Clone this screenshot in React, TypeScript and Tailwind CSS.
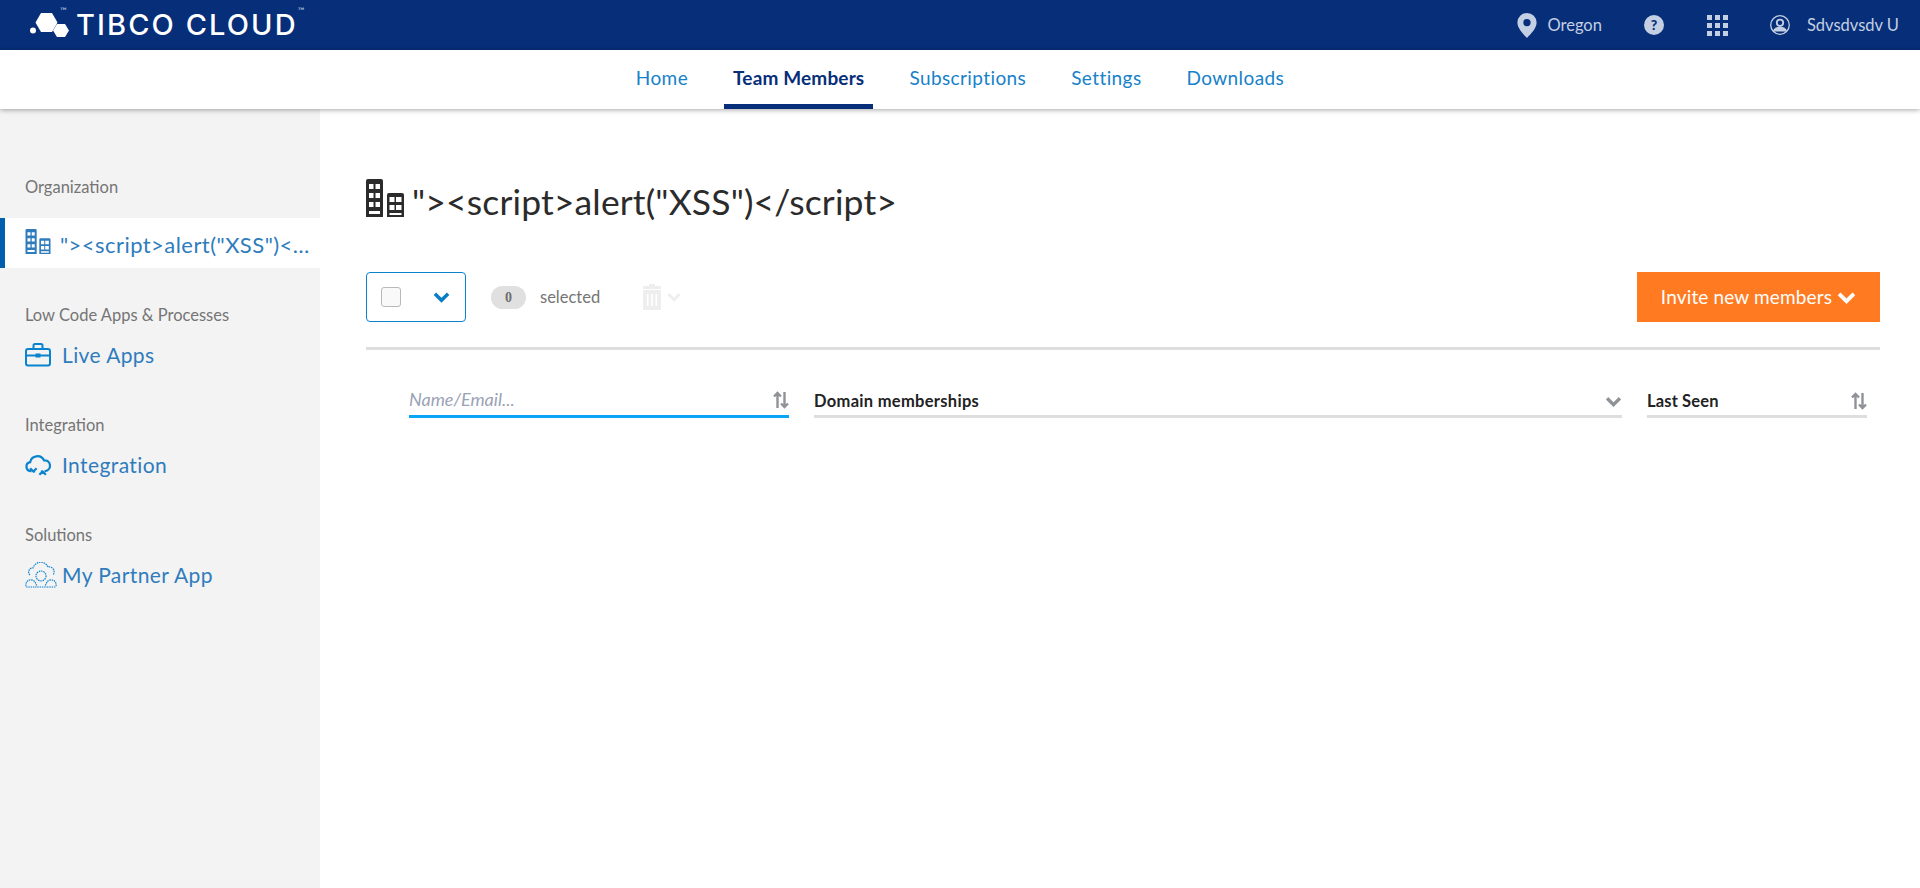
import { useState } from "react";

const FONT = "font-['Lato','Liberation_Sans',sans-serif]";

const Chevron = ({ className = "" }: { className?: string }) => (
  <svg viewBox="0 0 18 12" className={className} fill="none" stroke="currentColor" strokeWidth="3.6">
    <path d="M2 2.5 9 9.5l7-7" />
  </svg>
);

const SortIcon = () => (
  <svg viewBox="0 0 16 18" className="h-[18px] w-4 text-[#8f9297]" fill="none" stroke="currentColor" strokeWidth="2.4">
    <path d="M4.5 17V2M1 5.5l3.500-3.500L8 5.500" />
    <path d="M11.500 1v15M8 12.500l3.500 3.500 3.500-3.500" />
  </svg>
);

const Building = ({ className = "" }: { className?: string }) => (
  <svg viewBox="0 0 38 38" className={className} fill="currentColor">
    <path
      fillRule="evenodd"
      d="M2 0h13a2 2 0 0 1 2 2v36H0V2a2 2 0 0 1 2-2ZM3 5v5h4.500V5H3Zm6.500 0v5H14V5H9.500ZM3 14v5h4.500v-5H3Zm6.500 0v5H14v-5H9.500ZM3 23v5h4.500v-5H3Zm6.500 0v5H14v-5H9.500ZM3 32v3h11v-3H3Z"
    />
    <path
      fillRule="evenodd"
      d="M23 14h13a2 2 0 0 1 2 2v22H21V16a2 2 0 0 1 2-2Zm.500 4v5h5v-5h-5Zm6.500 0v5h5.500v-5H30Zm-6.500 8v5h5v-5h-5Zm6.500 0v5h5.500v-5H30Zm-6.500 8v2h12v-2h-12Z"
    />
  </svg>
);

const Briefcase = () => (
  <svg viewBox="0 0 26 24" className="h-[24px] w-[26px] text-[#0a83cf]" fill="none" stroke="currentColor" strokeWidth="2">
    <rect x="1" y="6" width="24" height="16.500" rx="2" />
    <path d="M8.500 6V2.500a1.500 1.500 0 0 1 1.500-1.500h6a1.500 1.500 0 0 1 1.500 1.500V6" />
    <path d="M1 12.500h24" />
    <rect x="10.500" y="10.500" width="5" height="4" fill="currentColor" stroke="none" />
  </svg>
);

const CloudSync = () => (
  <svg viewBox="0 0 28 24" className="h-[24px] w-[26px] text-[#0a83cf]" fill="none" stroke="currentColor" strokeWidth="2.400">
    <path d="M7 18.500H6a4.800 4.800 0 0 1-.5-9.500A8 8 0 0 1 20.500 7a5.800 5.800 0 0 1 1.500 11.500h-1" />
    <path d="M5.500 15.500 9 19l3.500-3.500M9 19h2M22.500 22.500 19 19l-3.500 3.500M19 19h-2" />
  </svg>
);

const PartnerCloud = () => (
  <svg viewBox="0 0 32 26" className="h-[26px] w-[32px] text-[#0a83cf]" fill="none" stroke="currentColor" strokeWidth="1.200" strokeDasharray="1.500 0.800">
    <path d="M5 13a4 4 0 0 1 3-7 8 8 0 0 1 15-1 5 5 0 0 1 5 8" />
    <circle cx="16" cy="14" r="5" />
    <path d="M1 24a5 5 0 0 1 9-4l2 4M31 24a5 5 0 0 0-9-4l-2 4M10 25h12M1 25h9M22 25h9" />
  </svg>
);

const Pin = () => (
  <svg viewBox="0 0 20 26" className="h-[25px] w-5 text-[#c3cfe2]" fill="currentColor">
    <path
      fillRule="evenodd"
      d="M10 0a10 10 0 0 1 10 10c0 6-6 12-10 16C6 22 0 16 0 10A10 10 0 0 1 10 0Zm0 6.200a3.800 3.800 0 1 0 0 7.600 3.800 3.800 0 0 0 0-7.600Z"
    />
  </svg>
);

const UserCircle = () => (
  <svg viewBox="0 0 20 20" className="h-5 w-5 text-[#c3cfe2]" fill="none" stroke="currentColor" strokeWidth="1.300">
    <circle cx="10" cy="10" r="9.300" />
    <circle cx="10" cy="7.800" r="3.200" strokeWidth="1.800" />
    <path d="M3.500 16.500c1-3 3.500-4 6.500-4s5.500 1 6.500 4" fill="currentColor" />
  </svg>
);

const Logo = () => (
  <div className="flex items-start">
    <svg viewBox="0 0 40 26" className="mt-[12px] h-[26px] w-[40px] text-white" fill="currentColor">
      <path d="M11 1h11l5.500 9.500L22 20H11L5.500 10.500Z" />
      <path d="M27 12h8l4 6.500-4 6.500h-8l-4-6.500Z" />
      <circle cx="3" cy="18.500" r="3" />
    </svg>
    <span className="mt-[3px] ml-[-10px] w-[10px] text-[9px] leading-[16px] text-[#c3cfe2]">™</span>
    <span className="ml-[6px] mt-[6px] font-['Inter',sans-serif] text-[29px] leading-[38px] font-medium tracking-[2.1px] text-white">
      TIBCO CLOUD
    </span>
    <span className="mt-[3px] text-[9px] leading-[16px] text-[#c3cfe2]">™</span>
  </div>
);

const TopBar = () => (
  <header className="flex h-[50px] items-start bg-[#062e79] pl-[30px] pr-[21px]">
    <Logo />
    <div className="ml-auto flex h-full items-center text-[16.5px] text-[#c3cfe2]">
      <Pin />
      <span className="ml-[10px]">Oregon</span>
      <span className="ml-[42px] flex h-5 w-5 items-center justify-center rounded-full bg-[#c3cfe2] text-[14px] leading-none font-black text-[#062e79]">
        ?
      </span>
      <span className="ml-[43px] grid grid-cols-3 gap-[3px]">
        {Array.from({ length: 9 }).map((_, i) => (
          <i key={i} className="block h-[5px] w-[5px] bg-[#c3cfe2]" />
        ))}
      </span>
      <span className="ml-[42px]">
        <UserCircle />
      </span>
      <span className="ml-[17px]">Sdvsdvsdv U</span>
    </div>
  </header>
);

const tabs = ["Home", "Team Members", "Subscriptions", "Settings", "Downloads"];

const TabBar = () => (
  <nav className="relative z-10 flex h-[59px] justify-center gap-[27px] bg-white shadow-[0_1px_5px_rgba(0,0,0,0.35)]">
    {tabs.map((t) =>
      t === "Team Members" ? (
        <a
          key={t}
          className="flex items-center border-b-[5px] border-[#062e79] px-[9px] pt-[2px] text-[19px] font-bold tracking-[0.15px] text-[#062e79]"
        >
          {t}
        </a>
      ) : (
        <a key={t} className="flex items-center px-[9px] pb-[2px] text-[19px] tracking-[0.4px] text-[#1781c9]">
          {t}
        </a>
      )
    )}
  </nav>
);

const SideGroup = ({ title, icon, label }: { title: string; icon: React.ReactNode; label: string }) => (
  <div className="mb-[35px]">
    <div className="pl-[25px] text-[16.5px] leading-[20px] text-[#757575]">{title}</div>
    <a className="mt-[5px] flex h-[50px] items-center pl-[25px] text-[21px] tracking-[0.4px] text-[#2f7cbd]">
      <span className="flex w-[37px] shrink-0">{icon}</span>
      <span>{label}</span>
    </a>
  </div>
);

const Sidebar = () => (
  <aside className="flex w-[320px] shrink-0 flex-col bg-[#f3f3f3] pt-[68px]">
    <div className="pl-[25px] text-[16.5px] leading-[20px] text-[#757575]">Organization</div>
    <a className="mt-[21px] mb-[37px] flex h-[50px] items-center border-l-[5px] border-[#015fad] bg-white pl-[20px] text-[#2f7cbd]">
      <Building className="mb-[3px] h-[25px] w-[26px] shrink-0" />
      <span className="ml-[9px] truncate pr-[6px] pt-[2px] text-[22px] tracking-[0.45px]">{'"><script>alert("XSS")</script>'}</span>
    </a>
    <SideGroup title="Low Code Apps & Processes" icon={<Briefcase />} label="Live Apps" />
    <SideGroup title="Integration" icon={<CloudSync />} label="Integration" />
    <SideGroup title="Solutions" icon={<PartnerCloud />} label="My Partner App" />
  </aside>
);

const Toolbar = () => (
  <div className="mt-[50px] flex h-[50px] items-center">
    <div className="flex h-[50px] w-[100px] items-center rounded-[4px] border border-[#0a83cf] pl-[14px]">
      <span className="h-5 w-5 rounded-[3px] border border-[#b9b9b9] bg-[#f9f9f9]" />
      <Chevron className="ml-[32px] h-[12px] w-[17px] text-[#0a7cc6]" />
    </div>
    <span className="ml-[25px] flex h-[23px] w-[35px] items-center justify-center rounded-full bg-[#e0e0e0] font-['Liberation_Serif',serif] text-[14px] font-bold text-[#6f6f6f]">
      0
    </span>
    <span className="ml-[14px] text-[16.5px] text-[#757575]">selected</span>
    <svg viewBox="0 0 18 26" className="ml-[43px] h-[26px] w-[18px] text-[#eeeeee]" fill="currentColor">
      <path
        fillRule="evenodd"
        d="M6 0h6v2h6v3H0V2h6ZM0 6h18v19a1 1 0 0 1-1 1H1a1 1 0 0 1-1-1Zm4 4v12h1.500V10Zm4.200 0v12h1.600V10Zm4.300 0v12H14V10Z"
      />
    </svg>
    <Chevron className="ml-[6px] h-[10px] w-[14px] text-[#eeeeee]" />
    <button className="ml-auto flex h-[50px] w-[243px] items-center justify-center gap-[5px] bg-[#ff7a21] text-[19px] tracking-[0.15px] text-white">
      Invite new members
      <Chevron className="h-[13px] w-[19px] text-white" />
    </button>
  </div>
);

const Filters = () => {
  const [name, setName] = useState("");
  return (
    <div className="mt-[34px] flex items-end gap-[25px] pl-[43px] pr-[13px]">
      <label className="flex h-[34px] w-[380px] items-center border-b-[3px] border-[#0aa5f5]">
        <input
          value={name}
          onChange={(e) => setName(e.target.value)}
          placeholder="Name/Email..."
          className="min-w-0 flex-1 text-[18px] italic text-[#333] outline-none placeholder:text-[#9aa3b5]"
        />
        <SortIcon />
      </label>
      <div className="flex h-[34px] flex-1 items-center justify-between border-b-[3px] border-[#dedede] pt-[3px] text-[16.5px] font-bold tracking-[0.3px] text-[#222]">
        <span>Domain memberships</span>
        <Chevron className="h-[11px] w-[17px] text-[#8f9297]" />
      </div>
      <div className="flex h-[34px] w-[220px] items-center justify-between border-b-[3px] border-[#dedede] pt-[3px] text-[16.5px] font-bold tracking-[0.15px] text-[#222]">
        <span>Last Seen</span>
        <SortIcon />
      </div>
    </div>
  );
};

export default function App() {
  return (
    <div className={`flex h-[888px] flex-col overflow-hidden bg-white ${FONT}`}>
      <TopBar />
      <TabBar />
      <div className="flex min-h-0 flex-1">
        <Sidebar />
        <main className="min-w-0 flex-1 pt-[68px] pl-[46px] pr-[40px]">
          <h1 className="flex h-[45px] items-end text-[#2b2b2b]">
            <Building className="mb-[5px] h-[38px] w-[38px] shrink-0" />
            <span className="mb-[-1px] ml-[8px] text-[35.500px] leading-[42px] tracking-[0.15px] font-normal">{'"><script>alert("XSS")</script>'}</span>
          </h1>
          <Toolbar />
          <div className="mt-[25px] h-[3px] bg-[#dedede]" />
          <Filters />
        </main>
      </div>
    </div>
  );
}
